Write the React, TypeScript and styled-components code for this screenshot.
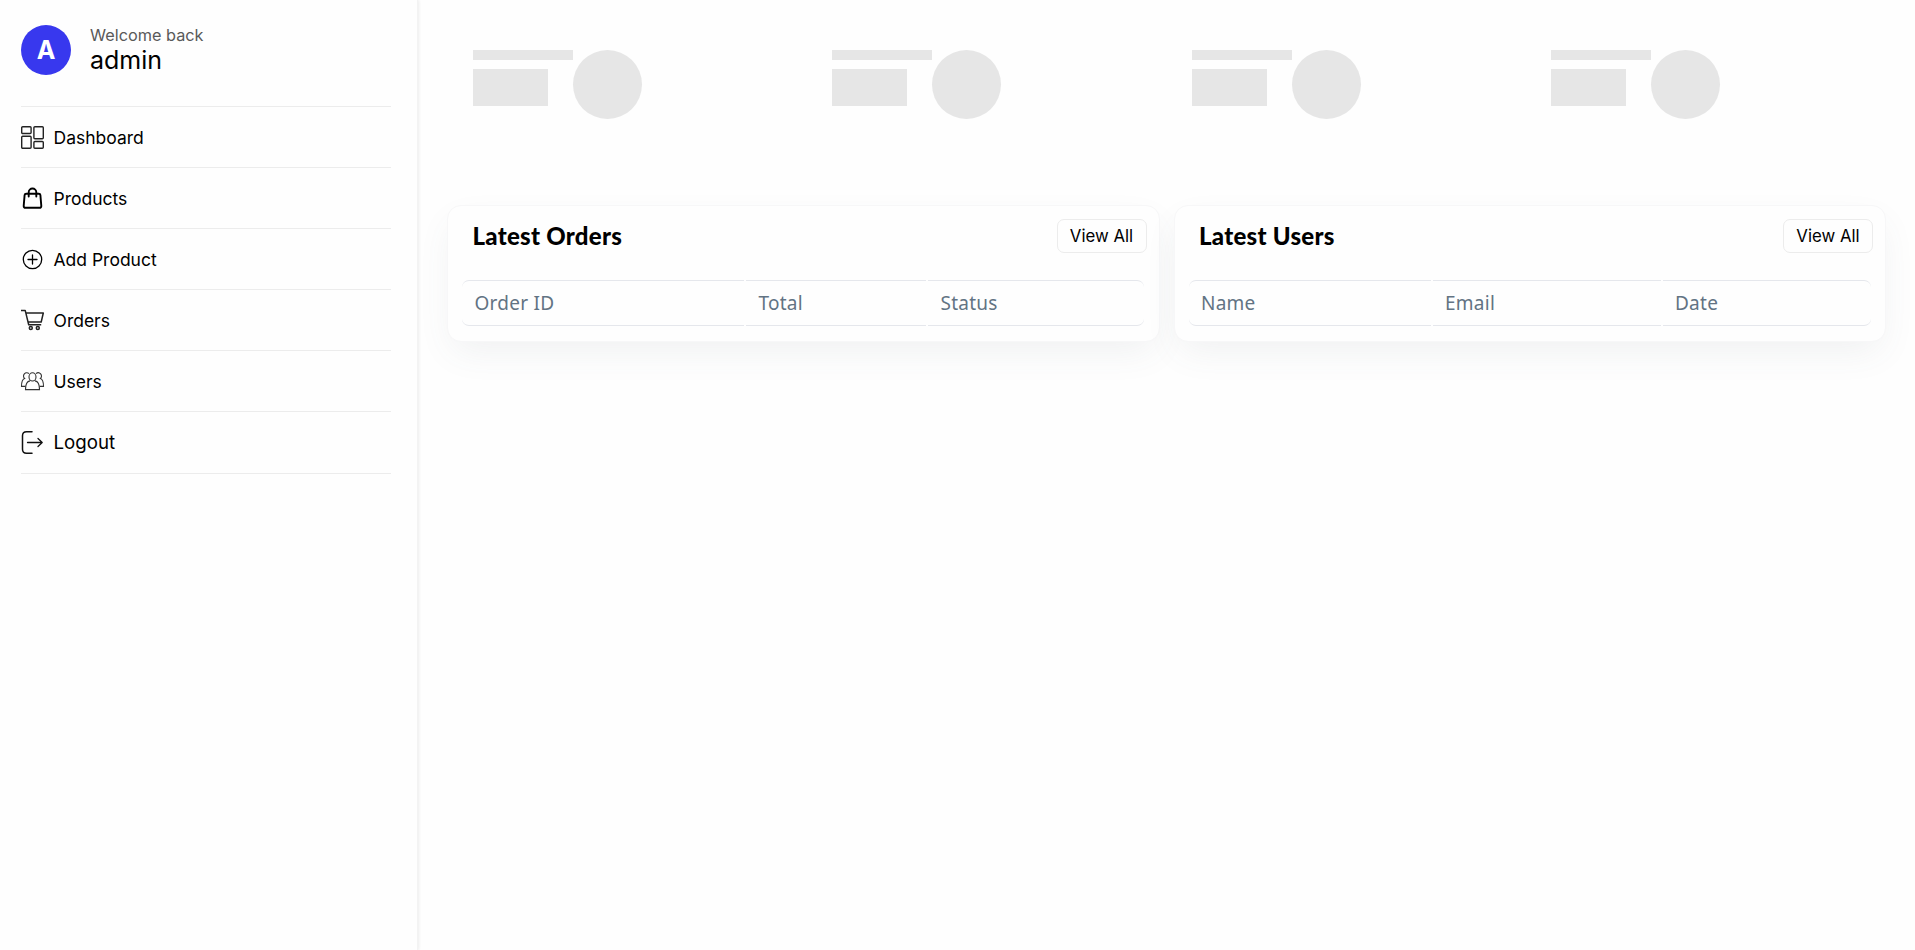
import React from "react";
import styled, { createGlobalStyle } from "styled-components";

const GlobalStyle = createGlobalStyle`
  *, *::before, *::after { box-sizing: border-box; }
  body { margin: 0; background: #fefefe; color: #000; font-family: Inter, "Liberation Sans", sans-serif; }
`;

const Page = styled.div`
  display: flex;
  height: 950px;
  overflow: hidden;
`;

const Sidebar = styled.aside`
  width: 418px;
  flex: none;
  padding: 0 26px 0 21px;
  background: #fefefe;
  border-right: 1px solid #f3f3f3;
  box-shadow: 1px 0 3px rgba(0, 0, 0, 0.07);
`;

const Profile = styled.div`
  display: flex;
  gap: 19px;
  height: 107px;
  padding-top: 25px;
  border-bottom: 1px solid #ececec;
`;

const Avatar = styled.div`
  width: 50px;
  height: 50px;
  border-radius: 50%;
  background: #3838ee;
  color: #fff;
  font-size: 25px;
  font-weight: 700;
  line-height: 50px;
  text-align: center;
`;

const Greeting = styled.div`
  display: flex;
  flex-direction: column;
`;

const Welcome = styled.span`
  font-size: 16.3px;
  line-height: 20px;
  color: #595959;
`;

const UserName = styled.span`
  font-size: 25px;
  line-height: 30px;
`;

const NavItem = styled.a<{ $last?: boolean }>`
  display: flex;
  align-items: center;
  gap: 9.5px;
  height: ${(p) => (p.$last ? 62 : 61)}px;
  padding-bottom: ${(p) => (p.$last ? 1 : 0)}px;
  border-bottom: 1px solid #ececec;
  font-size: ${(p) => (p.$last ? 18.7 : 17.5)}px;
`;

const Icon = styled.svg`
  width: 23px;
  height: 23px;
  flex: none;
  fill: none;
  overflow: visible;
`;

const Main = styled.main`
  flex: 1;
  padding: 50px 29px 0;
`;

const Stats = styled.div`
  display: grid;
  grid-template-columns: repeat(4, 1fr);
  height: 155px;
  padding: 0 1px;
`;

const Skeleton = styled.div`
  display: flex;
  padding-left: 25px;
`;

const SkeletonLines = styled.div`
  display: flex;
  flex-direction: column;
  gap: 9px;
  width: 100px;
`;

const SkeletonBlock = styled.div<{ $w: number; $h: number; $round?: boolean }>`
  width: ${(p) => p.$w}px;
  height: ${(p) => p.$h}px;
  border-radius: ${(p) => (p.$round ? "50%" : "0")};
  background: #e6e6e6;
`;

const Panels = styled.div`
  display: grid;
  grid-template-columns: 1fr 1fr;
  gap: 14px;
`;

const Card = styled.section`
  height: 136.5px;
  border: 1px solid #f7f7f8;
  border-radius: 14px;
  background: #fefefe;
  box-shadow: 0 14px 36px -6px rgba(80, 95, 110, 0.085);
`;

const CardHead = styled.header`
  display: flex;
  align-items: center;
  justify-content: space-between;
  height: 60px;
  padding: 0 12px 0 24.5px;
`;

const Title = styled.h2`
  margin: 0;
  font: 900 24px/30px Lato, sans-serif;
  letter-spacing: 0.27px;
`;

const ViewAll = styled.button`
  width: 90px;
  height: 34px;
  padding: 0;
  border: 1px solid #ececec;
  border-radius: 7px;
  background: #fefefe;
  color: #000;
  font: 400 16.8px Inter, sans-serif;
`;

const HeadRow = styled.div<{ $columns: string }>`
  display: grid;
  grid-template-columns: ${(p) => p.$columns};
  gap: 2px;
  margin: 14px 14px 0;
`;

const HeadCell = styled.div`
  height: 46px;
  padding: 1px 0 0 12.5px;
  border: solid #e5e7ec;
  border-width: 1px 0;
  color: #627383;
  font: 400 19px/43px "Noto Sans", sans-serif;
  letter-spacing: 0.25px;
  &:first-child { border-radius: 7px 0 0 7px; }
  &:last-child { border-radius: 0 7px 7px 0; }
`;

const DashboardIcon = () => (
  <Icon viewBox="0 0 23 23" stroke="#222" strokeWidth="1.4">
    <rect x=".7" y=".7" width="9.4" height="6.8" rx="1" />
    <rect x="12.9" y=".7" width="9.4" height="12" rx="1" />
    <rect x=".7" y="10.3" width="9.4" height="12" rx="1" />
    <rect x="12.9" y="15.5" width="9.4" height="6.8" rx="1" />
  </Icon>
);

const BagIcon = () => (
  <Icon viewBox="0 0 23 23" stroke="#000" strokeWidth="1.9" strokeLinecap="round" strokeLinejoin="round">
    <path d="M5.2 6.7h12.6c1 0 1.5.5 1.6 1.4l.9 10.7c.1 1.2-.6 2-1.8 2h-14c-1.2 0-1.9-.8-1.8-2L3.6 8.1c.1-.9.6-1.4 1.6-1.4Z" />
    <path d="M7.7 9.5V5.3a3.8 3.8 0 0 1 7.6 0v4.2" />
  </Icon>
);

const PlusIcon = () => (
  <Icon viewBox="0 0 23 23" stroke="#000" strokeWidth="1.3" strokeLinecap="round">
    <circle cx="11.5" cy="11.5" r="9.2" />
    <path d="M11.5 7v9M7 11.5h9" />
  </Icon>
);

const CartIcon = () => (
  <Icon viewBox="0 0 23 23" stroke="#222" strokeWidth="1.5" strokeLinejoin="round">
    <path d="M0 1.4h4.2l3.5 14.4h12.5M4.9 4h17.4L20.2 13H7" />
    <circle cx="9.8" cy="19" r="1.5" />
    <circle cx="16.8" cy="19" r="1.5" />
  </Icon>
);

const UsersIcon = () => (
  <Icon viewBox="0 0 23 23" stroke="#333" strokeWidth="1.1">
    <ellipse cx="11.5" cy="6.9" rx="3.5" ry="4.1" />
    <path d="M9 10.9c-3.3.5-4.5 2.8-4.5 8.7h14c0-5.900-1.200-8.200-4.500-8.700" />
    <path d="M8 3.6A2.9 2.9 0 1 0 3.6 8.5C1.4 9.3.5 11.8.5 16.4h3.6M15 3.6a2.9 2.9 0 1 1 4.4 4.9c2.2.8 3.1 3.3 3.1 7.9h-3.6" />
  </Icon>
);

const LogoutIcon = () => (
  <Icon viewBox="0 0 23 23" stroke="#111" strokeWidth="1.5" strokeLinecap="round" strokeLinejoin="round">
    <path d="M11 .8H5.5Q1.5.8 1.5 4.8v13.4q0 4 4 4H11" />
    <path d="M6.5 11.5H21M17 7.5l4.2 4-4.2 4" strokeWidth="1.3" />
  </Icon>
);

const navigation = [
  { label: "Dashboard", Glyph: DashboardIcon },
  { label: "Products", Glyph: BagIcon },
  { label: "Add Product", Glyph: PlusIcon },
  { label: "Orders", Glyph: CartIcon },
  { label: "Users", Glyph: UsersIcon },
  { label: "Logout", Glyph: LogoutIcon },
];

const panels = [
  { title: "Latest Orders", columns: "282px 180px 216px", heads: ["Order ID", "Total", "Status"] },
  { title: "Latest Users", columns: "242px 228px 1fr", heads: ["Name", "Email", "Date"] },
];

export default function App() {
  return (
    <>
      <GlobalStyle />
      <Page>
        <Sidebar>
          <Profile>
            <Avatar>A</Avatar>
            <Greeting>
              <Welcome>Welcome back</Welcome>
              <UserName>admin</UserName>
            </Greeting>
          </Profile>
          <nav>
            {navigation.map(({ label, Glyph }, index) => (
              <NavItem key={label} $last={index === navigation.length - 1}>
                <Glyph />
                {label}
              </NavItem>
            ))}
          </nav>
        </Sidebar>
        <Main>
          <Stats>
            {[0, 1, 2, 3].map((n) => (
              <Skeleton key={n}>
                <SkeletonLines>
                  <SkeletonBlock $w={100} $h={10} />
                  <SkeletonBlock $w={75} $h={37} />
                </SkeletonLines>
                <SkeletonBlock $w={69} $h={69} $round />
              </Skeleton>
            ))}
          </Stats>
          <Panels>
            {panels.map(({ title, columns, heads }) => (
              <Card key={title}>
                <CardHead>
                  <Title>{title}</Title>
                  <ViewAll>View All</ViewAll>
                </CardHead>
                <HeadRow $columns={columns}>
                  {heads.map((head) => (
                    <HeadCell key={head}>{head}</HeadCell>
                  ))}
                </HeadRow>
              </Card>
            ))}
          </Panels>
        </Main>
      </Page>
    </>
  );
}
